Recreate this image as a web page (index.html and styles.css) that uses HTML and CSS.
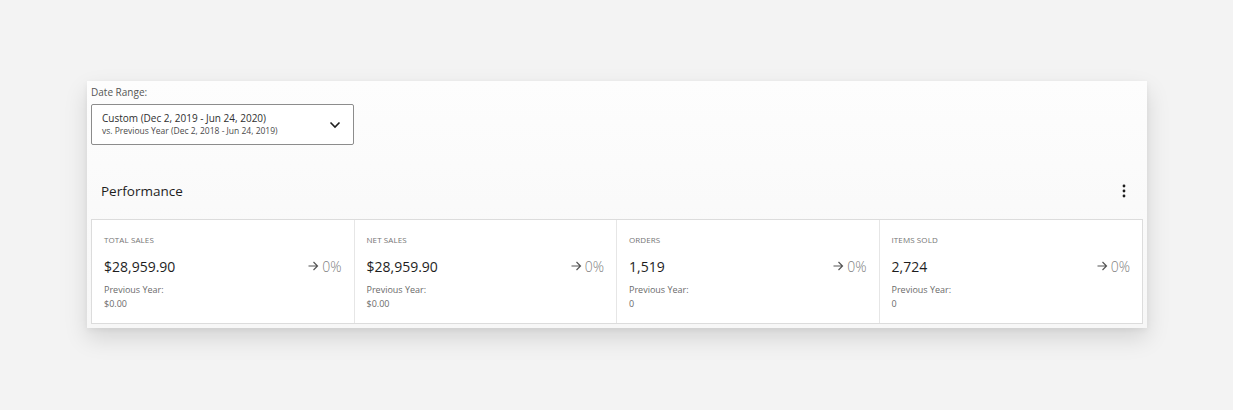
FILE: index.html
```html
<!DOCTYPE html>
<html lang="en">
<head>
<meta charset="utf-8">
<title>Performance</title>
<link rel="stylesheet" href="styles.css">
</head>
<body>
<div class="page">
  <section class="panel">
    <div class="range">
      <div class="range-label">Date Range:</div>
      <button class="select">
        <span class="select-text">
          <span class="line1">Custom (Dec 2, 2019 - Jun 24, 2020)</span>
          <span class="line2">vs. Previous Year (Dec 2, 2018 - Jun 24, 2019)</span>
        </span>
        <svg class="chev" width="12" height="8" viewBox="0 0 12 8"><path d="M1.5 1.5 L6 6 L10.5 1.5" fill="none" stroke="#1e1e1e" stroke-width="1.6"/></svg>
      </button>
    </div>
    <div class="perf-head">
      <h2 class="perf-title">Performance</h2>
      <svg class="kebab" width="4" height="14" viewBox="0 0 4 14"><circle cx="2" cy="2" r="1.4" fill="#1e1e1e"/><circle cx="2" cy="7" r="1.4" fill="#1e1e1e"/><circle cx="2" cy="12" r="1.4" fill="#1e1e1e"/></svg>
    </div>
    <div class="stats">
      <div class="cell">
        <div class="label">TOTAL SALES</div>
        <div class="row"><span class="value">$28,959.90</span><span class="delta"><svg class="arrow" width="11" height="10" viewBox="0 0 11 10"><path d="M0.5 5 H9.5 M5.5 1 L9.5 5 L5.5 9" fill="none" stroke="#555" stroke-width="1.2"/></svg>0%</span></div>
        <div class="prev">Previous Year:</div>
        <div class="prev-val">$0.00</div>
      </div>
      <div class="cell">
        <div class="label">NET SALES</div>
        <div class="row"><span class="value">$28,959.90</span><span class="delta"><svg class="arrow" width="11" height="10" viewBox="0 0 11 10"><path d="M0.5 5 H9.5 M5.5 1 L9.5 5 L5.5 9" fill="none" stroke="#555" stroke-width="1.2"/></svg>0%</span></div>
        <div class="prev">Previous Year:</div>
        <div class="prev-val">$0.00</div>
      </div>
      <div class="cell">
        <div class="label">ORDERS</div>
        <div class="row"><span class="value">1,519</span><span class="delta"><svg class="arrow" width="11" height="10" viewBox="0 0 11 10"><path d="M0.5 5 H9.5 M5.5 1 L9.5 5 L5.5 9" fill="none" stroke="#555" stroke-width="1.2"/></svg>0%</span></div>
        <div class="prev">Previous Year:</div>
        <div class="prev-val">0</div>
      </div>
      <div class="cell">
        <div class="label">ITEMS SOLD</div>
        <div class="row"><span class="value">2,724</span><span class="delta"><svg class="arrow" width="11" height="10" viewBox="0 0 11 10"><path d="M0.5 5 H9.5 M5.5 1 L9.5 5 L5.5 9" fill="none" stroke="#555" stroke-width="1.2"/></svg>0%</span></div>
        <div class="prev">Previous Year:</div>
        <div class="prev-val">0</div>
      </div>
    </div>
  </section>
</div>
</body>
</html>
```
FILE: styles.css
```css
* { box-sizing: border-box; }
html, body { margin: 0; padding: 0; }
body {
  background: #f3f3f3;
  font-family: "Open Sans", "Noto Sans", sans-serif;
  color: #1e1e1e;
  width: 1233px;
  height: 410px;
  overflow: hidden;
}
.page {
  padding: 81px 0 0 87px;
}
.panel {
  width: 1060px;
  height: 247px;
  background: linear-gradient(180deg, #fdfdfd 0%, #f7f7f7 100%);
  box-shadow: 0 10px 22px rgba(0,0,0,0.13), 0 2px 6px rgba(0,0,0,0.05);
  padding: 4px;
  display: flex;
  flex-direction: column;
}
.range { display: flex; flex-direction: column; }
.range-label {
  font-size: 10px;
  color: #555;
  line-height: 14px;
  margin-bottom: 5px;
}
.select {
  width: 263px;
  height: 41px;
  background: #fff;
  border: 1px solid #8c8c8c;
  border-radius: 2px;
  display: flex;
  align-items: center;
  justify-content: space-between;
  padding: 0 12px 0 10px;
  font-family: inherit;
  text-align: left;
  cursor: pointer;
}
.select-text { display: flex; flex-direction: column; }
.line1 { font-size: 10px; line-height: 13px; color: #2f2f2f; }
.line2 { font-size: 8.5px; line-height: 12px; color: #4a4a4a; }
.chev { display: block; margin-top: 1px; }
.perf-head {
  display: flex;
  align-items: center;
  justify-content: space-between;
  height: 74px;
  padding: 18px 17px 0 10px;
}
.perf-title {
  margin: 0;
  font-size: 13.5px;
  font-weight: 400;
  color: #1e1e1e;
}
.kebab { display: block; }
.stats {
  display: grid;
  grid-template-columns: repeat(4, 1fr);
  width: 1052px;
  height: 105px;
  border: 1px solid #dcdcdc;
  background: #fff;
}
.cell {
  padding: 14px 12px 0 12px;
  border-right: 1px solid #e6e6e6;
}
.cell:last-child { border-right: none; }
.label {
  font-size: 8px;
  color: #757575;
  line-height: 12px;
  letter-spacing: 0.1px;
}
.row {
  display: flex;
  justify-content: space-between;
  align-items: center;
  margin-top: 11px;
  height: 18px;
}
.value { font-size: 14px; color: #1e1e1e; }
.delta {
  display: flex;
  align-items: center;
  gap: 3px;
  font-size: 14px;
  color: #808080;
  font-weight: 300;
}
.arrow { display: block; }
.prev {
  margin-top: 8px;
  font-size: 9px;
  color: #6b6b6b;
  line-height: 13px;
}
.prev-val {
  font-size: 9px;
  color: #6b6b6b;
  line-height: 13px;
  margin-top: 1px;
}
```
